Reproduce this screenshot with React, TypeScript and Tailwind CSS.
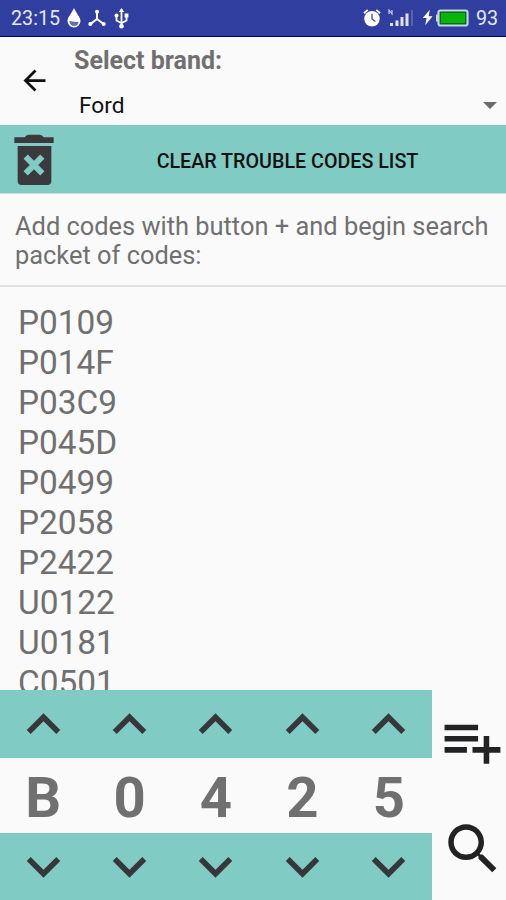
import React, { useState } from 'react';

const CODES = ['P0109', 'P014F', 'P03C9', 'P045D', 'P0499', 'P2058', 'P2422', 'U0122', 'U0181', 'C0501'];

const DIGITS = ['0', '1', '2', '3', '4', '5', '6', '7', '8', '9', 'A', 'B', 'C', 'D', 'E', 'F'];
const SYSTEMS = ['P', 'B', 'C', 'U'];

const StatusBar: React.FC = () => (
    <div className="flex h-[37px] shrink-0 items-center border-b border-[#00006b] bg-[#303f9f] pl-[11px] pr-[9px] text-[19.7px] text-[#e4e8fa]">
        <span className="w-[51px] pt-[2px]">23:15</span>
        {/* drop */}
        <svg className="ml-[5px] h-[20px] w-[14px]" viewBox="0 0 14 20">
            <path d="M7 0C9 5 13.5 9 13.5 13a6.5 6.5 0 0 1-13 0C.5 9 5 5 7 0z" fill="#fff" />
            <path d="M2.4 13.5c2.2-1.6 3.7 1.6 9.2.2A4.6 4.6 0 0 1 7 18a4.6 4.6 0 0 1-4.6-4.5z" fill="#6570b8" />
        </svg>
        {/* hub */}
        <svg className="ml-[7px] h-[18px] w-[18px]" viewBox="0 0 18 18">
            <path d="M9 3v7M9 10l-6.5 5M9 10l6.5 5" stroke="#fff" strokeWidth="2" fill="none" />
            <circle cx="9" cy="2.8" r="2" fill="#fff" />
            <circle cx="2.3" cy="15" r="2" fill="#fff" />
            <circle cx="15.7" cy="15" r="2" fill="#fff" />
        </svg>
        {/* usb */}
        <svg className="ml-[8px] h-[21px] w-[15px]" viewBox="0 0 15 21">
            <path d="M7.5 2v16M2.5 7v5.5l5 2.8 5-2.8V7" stroke="#fff" strokeWidth="1.8" fill="none" />
            <path d="M4.8 4L7.5 0l2.7 4z" fill="#fff" />
            <circle cx="2.5" cy="7.5" r="2" fill="#fff" />
            <path d="M10.6 5.5h3.8v4h-3.8z" fill="#fff" />
            <circle cx="7.5" cy="18.3" r="2.3" fill="#fff" />
        </svg>
        <div className="ml-auto flex items-center">
            {/* alarm */}
            <svg className="h-[20px] w-[18px]" viewBox="0 0 19 20">
                <circle cx="9.5" cy="10.8" r="8.2" fill="#fff" />
                <path d="M1 5l4-3.6M18 5l-4-3.6" stroke="#fff" strokeWidth="2" />
                <path d="M9.5 5.5v5.5l3.5 2.6" stroke="#303f9f" strokeWidth="1.3" fill="none" />
            </svg>
            {/* signal */}
            <svg className="ml-[7px] h-[18px] w-[26px]" viewBox="0 0 26 18">
                <path d="M1 5V1l3 4V1" stroke="#c5cbf0" strokeWidth="1.2" fill="none" />
                <path d="M2 14h3v3H2zM7.5 11.5h3V17h-3zM12.5 8h3v9h-3zM17.5 4.5h3V17h-3z" fill="#dfe3fa" />
                <path d="M23 1h2v16h-2z" fill="#5562b5" />
            </svg>
            {/* charging */}
            <svg className="ml-[8px] h-[17px] w-[11px]" viewBox="0 0 12 17">
                <path d="M8.5 0L.8 9H5L3.5 17l8-10H7.200z" fill="#fff" />
            </svg>
            <svg className="ml-[3px] mr-[7px] h-[18px] w-[33px]" viewBox="0 0 33 18">
                <path d="M0 5.5h2v7H0z" fill="#c9cff0" />
                <rect x="2.5" y="1.5" width="29" height="15" rx="2" fill="#08b508" stroke="#c9cff0" strokeWidth="2.2" />
                <rect x="4.3" y="3.3" width="25.4" height="11.4" fill="none" stroke="#14532d" strokeWidth="1" />
            </svg>
            <span className="w-[21px] pt-[1px]">93</span>
        </div>
    </div>
);

const BackIcon = () => (
    <svg className="h-[33px] w-[33px]" viewBox="0 0 24 24" fill="#111">
        <path d="M20 11H7.83l5.59-5.59L12 4l-8 8 8 8 1.41-1.41L7.83 13H20v-2z" />
    </svg>
);

const TrashIcon = () => (
    <svg className="h-[51px] w-[40px]" viewBox="0 0 120 153">
        <path d="M1 10h31q4-8 12-8h33q8 0 12 8h30v17H1z" fill="#3a3a3c" />
        <path d="M11 36h101v105q0 12-12 12H23q-12 0-12-12z" fill="#3a3a3c" />
        <path d="M35 68l50 50M85 68l-50 50" stroke="#80cbc4" strokeWidth="18" />
    </svg>
);

const ChevronIcon = ({ up }: { up?: boolean }) => (
    <svg className="h-[67px] w-[67px]" viewBox="0 0 24 24" fill="#37373b">
        {up ? (
            <path d="M12 8l-6 6 1.41 1.41L12 10.83l4.59 4.58L18 14z" />
        ) : (
            <path d="M16.59 8.59L12 13.17 7.41 8.59 6 10l6 6 6-6z" />
        )}
    </svg>
);

const App: React.FC = () => {
    const [codes, setCodes] = useState<string[]>(CODES);
    const [current, setCurrent] = useState<string[]>(['B', '0', '4', '2', '5']);

    const step = (idx: number, delta: number) => {
        const set = idx === 0 ? SYSTEMS : DIGITS;
        const pos = (set.indexOf(current[idx]) + delta + set.length) % set.length;
        setCurrent(current.map((c, i) => (i === idx ? set[pos] : c)));
    };

    return (
        <div className="flex h-[900px] w-[506px] flex-col overflow-hidden bg-[#fafafa] font-['Roboto',sans-serif] text-[#707070]">
            <StatusBar />

            {/* Header */}
            <header className="flex h-[88px] shrink-0">
                <button className="flex w-[74px] items-center pb-[2px] pl-[17.5px]" aria-label="Back">
                    <BackIcon />
                </button>
                <div className="flex flex-1 flex-col pt-[9px]">
                    <h1 className="text-[25px] font-bold leading-[30px]">Select brand:</h1>
                    <div className="mt-[13px] flex items-center justify-between pl-[5px] pr-[9px]">
                        <span className="pt-[2px] text-[22.7px] leading-[30px] text-[#111]">Ford</span>
                        <svg className="h-[7px] w-[14px]" viewBox="0 0 14 7" fill="#6b6b6b">
                            <path d="M0 0h14L7 7z" />
                        </svg>
                    </div>
                </div>
            </header>

            {/* Clear list */}
            <button
                onClick={() => setCodes([])}
                className="flex h-[69px] shrink-0 items-center border-b border-[#d5dcdc] bg-[#80cbc4] pl-[14px]"
            >
                <TrashIcon />
                <span className="ml-[15px] flex-1 pt-[5px] text-center text-[19.7px] font-medium text-[#111]">
                    CLEAR TROUBLE CODES LIST
                </span>
            </button>

            <p className="h-[93px] shrink-0 whitespace-nowrap border-b-2 border-[#e1e1e1] pl-[15px] pt-[18px] text-[25.4px] leading-[29.4px]">
                Add codes with button + and begin search
                <br />
                packet of codes:
            </p>

            {/* Codes */}
            <ul className="min-h-0 flex-1 overflow-hidden pl-[18px] pt-[16px] text-[33.4px] leading-[40px]">
                {codes.map(code => (
                    <li key={code}>{code}</li>
                ))}
            </ul>

            {/* Code picker */}
            <div className="flex h-[210px] shrink-0">
                <div className="flex w-[432px] flex-col">
                    <div className="grid h-[68px] shrink-0 grid-cols-5 bg-[#80cbc4]">
                        {current.map((_, i) => (
                            <button key={i} onClick={() => step(i, 1)} className="flex items-center justify-center" aria-label="Next">
                                <ChevronIcon up />
                            </button>
                        ))}
                    </div>
                    <div className="grid h-[75px] shrink-0 grid-cols-5 pt-[3px] text-center text-[56.25px] font-bold leading-[75px]">
                        {current.map((c, i) => (
                            <span key={i}>{c}</span>
                        ))}
                    </div>
                    <div className="grid h-[67px] shrink-0 grid-cols-5 bg-[#80cbc4]">
                        {current.map((_, i) => (
                            <button key={i} onClick={() => step(i, -1)} className="flex items-center justify-center" aria-label="Previous">
                                <ChevronIcon />
                            </button>
                        ))}
                    </div>
                </div>
                <div className="flex flex-1 flex-col items-end pr-[0.5px] pt-[18px]">
                    <button onClick={() => setCodes([...codes, current.join('')])} aria-label="Add code">
                        <svg className="h-[67px] w-[67px]" viewBox="0 0 24 24" fill="#222224">
                            <path d="M14 10H2v2h12v-2zm0-4H2v2h12V6zm4 8v-4h-2v4h-4v2h4v4h2v-4h4v-2h-4zM2 16h8v-2H2v2z" />
                        </svg>
                    </button>
                    <button className="mt-[41px]" aria-label="Search">
                        <svg className="h-[66px] w-[66px]" viewBox="0 0 24 24" fill="#222224">
                            <path d="M15.5 14h-.79l-.28-.27C15.41 12.59 16 11.11 16 9.5 16 5.91 13.09 3 9.5 3S3 5.91 3 9.5 5.91 16 9.5 16c1.61 0 3.09-.59 4.23-1.57l.27.28v.79l5 4.99L20.49 19l-4.99-5zm-6 0C7.01 14 5 11.99 5 9.5S7.01 5 9.5 5 14 7.01 14 9.5 11.99 14 9.5 14z" />
                        </svg>
                    </button>
                </div>
            </div>
        </div>
    );
};

export default App;
